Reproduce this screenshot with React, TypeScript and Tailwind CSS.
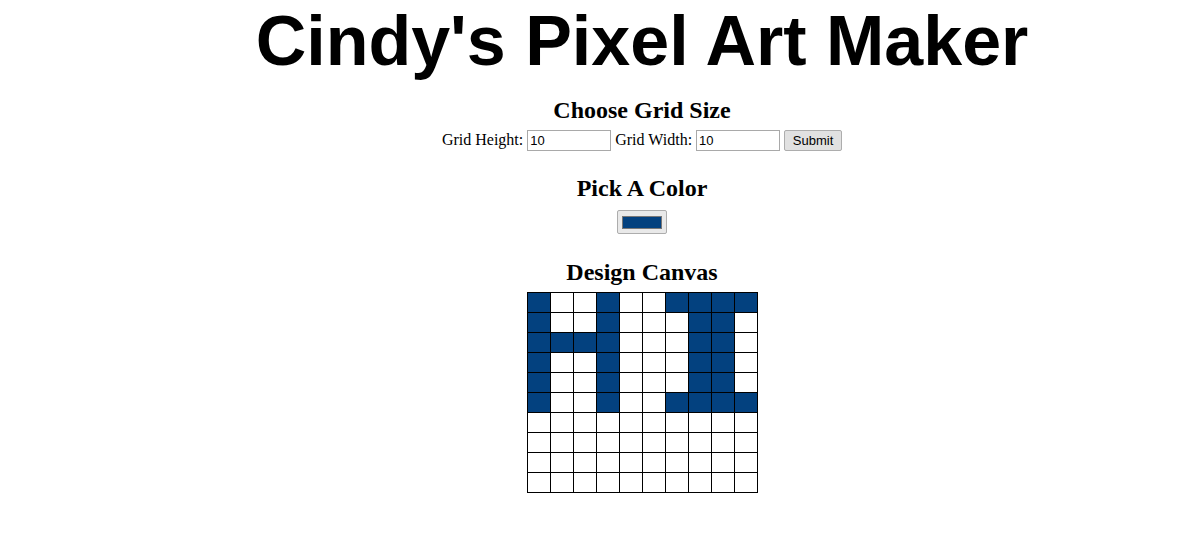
const filled: number[][] = [
  [0, 3, 6, 7, 8, 9],
  [0, 3, 7, 8],
  [0, 1, 2, 3, 7, 8],
  [0, 3, 7, 8],
  [0, 3, 7, 8],
  [0, 3, 6, 7, 8, 9],
]

const sans = { fontFamily: '"Liberation Sans", Arial, sans-serif' }

function Canvas() {
  const cells = []
  for (let r = 0; r < 10; r++) {
    for (let c = 0; c < 10; c++) {
      const on = (filled[r] || []).includes(c)
      cells.push(<div key={`${r}-${c}`} className={on ? 'bg-[#03417f]' : 'bg-white'} />)
    }
  }
  return (
    <div className="mx-auto grid w-fit grid-cols-[repeat(10,22px)] grid-rows-[repeat(10,19px)] gap-px bg-black p-px">
      {cells}
    </div>
  )
}

export default function App() {
  return (
    <div className="min-h-screen bg-white pl-[93px] text-center text-black" style={{ fontFamily: '"Liberation Serif", serif' }}>
      <h1 className="m-0 text-[70px] font-bold leading-[82px]" style={sans}>
        Cindy's Pixel Art Maker
      </h1>
      <h2 className="mt-[14px] text-[24px] font-bold leading-[28px]">Choose Grid Size</h2>
      <form className="mt-[4px] flex items-center justify-center text-[16px]" onSubmit={(e) => e.preventDefault()}>
        <label>Grid Height:</label>
        <input type="number" defaultValue={10} className="ml-1 h-[21px] w-[84px] border border-[#a9a9a9] px-[2px] text-[13px]" style={sans} />
        <label className="ml-1">Grid Width:</label>
        <input type="number" defaultValue={10} className="ml-1 h-[21px] w-[84px] border border-[#a9a9a9] px-[2px] text-[13px]" style={sans} />
        <button type="submit" className="ml-1 h-[21px] w-[58px] rounded-[2px] border border-[#adadad] bg-[#e1e1e1] text-[13px]" style={sans}>
          Submit
        </button>
      </form>
      <h2 className="mt-[22px] text-[24px] font-bold leading-[28px]">Pick A Color</h2>
      <div className="mt-[8px] flex justify-center">
        <div className="flex h-[24px] w-[50px] items-center justify-center rounded-[2px] border border-[#adadad] bg-[#e9e9e9]">
          <div className="h-[13px] w-[40px] border border-[#777] bg-[#03417f]" />
        </div>
      </div>
      <h2 className="mt-[24px] text-[24px] font-bold leading-[28px]">Design Canvas</h2>
      <div className="mt-[6px]">
        <Canvas />
      </div>
    </div>
  )
}
